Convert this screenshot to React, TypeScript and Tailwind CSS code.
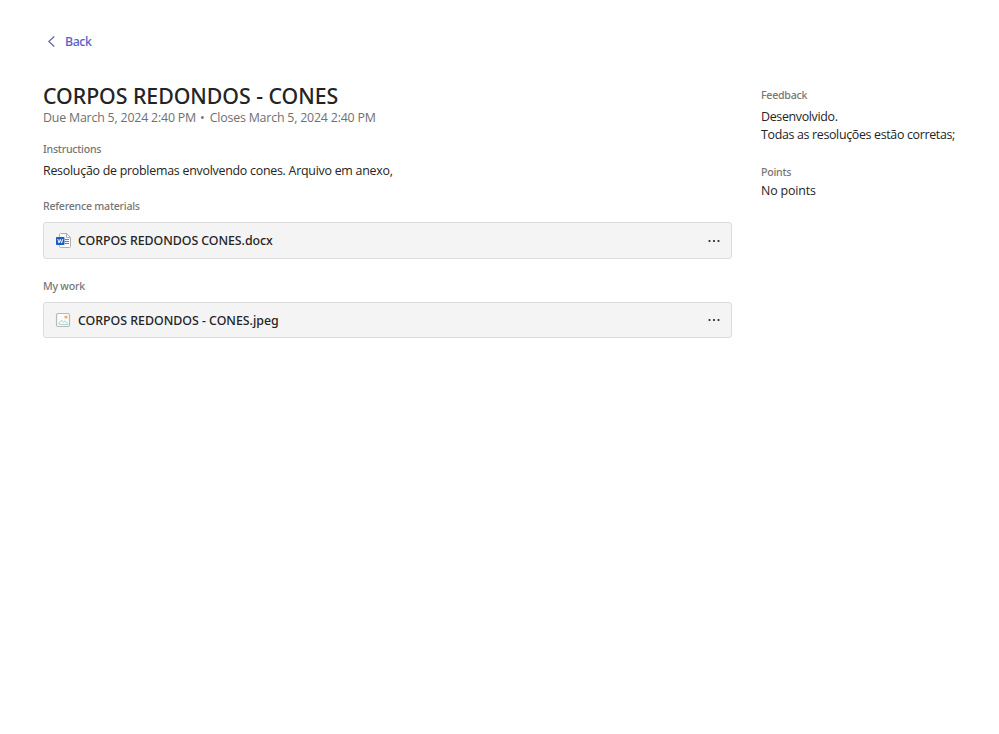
import React from "react";

function WordIcon() {
  return (
    <svg width="16" height="16" viewBox="0 0 16 16" className="shrink-0">
      <path d="M4.500 0.500h6l4 4v9a1 1 0 0 1-1 1h-9a1 1 0 0 1-1-1v-12a1 1 0 0 1 1-1z" fill="#fcfcfc" stroke="#b0b0b0" />
      <path d="M10.500 0.500v4h4" fill="none" stroke="#b0b0b0" />
      <path d="M9 6.500h4M9 8.500h4M9 10.500h4" stroke="#4a8be0" />
      <rect x="0" y="4" width="8.500" height="8" rx="0.800" fill="#1e5cc4" />
      <path d="M1.800 6l1.200 4 1.300-3.700 1.300 3.700 1.200-4" fill="none" stroke="#fff" strokeWidth="0.900" />
    </svg>
  );
}

function ImageIcon() {
  return (
    <svg width="16" height="16" viewBox="0 0 16 16" className="shrink-0">
      <rect x="1.500" y="1.500" width="13" height="13" rx="1.500" fill="#fafafa" stroke="#b8b8b8" strokeWidth="1.200" />
      <path d="M4 12.300v-1.500l2.500-2.500 2 2 1.300-1.200 2.700 2.300v1.200z" fill="none" stroke="#a5d5cc" strokeWidth="1" />
      <circle cx="11" cy="5" r="1.600" fill="#f6ad55" />
    </svg>
  );
}

function MoreIcon() {
  return (
    <svg width="14" height="4" viewBox="0 0 14 4" className="shrink-0" fill="#242424">
      <circle cx="2.500" cy="2" r="1.100" />
      <circle cx="7" cy="2" r="1.100" />
      <circle cx="11.500" cy="2" r="1.100" />
    </svg>
  );
}

function Label({ className, children }: { className: string; children: React.ReactNode }) {
  return <h2 className={`h-4 whitespace-nowrap font-['Noto_Sans',sans-serif] text-[10.6px] leading-4 font-medium tracking-[-0.24px] text-[#767676] ${className}`}>{children}</h2>;
}

function FileRow({ icon, name, className, nameClass }: { icon: React.ReactNode; name: string; className: string; nameClass: string }) {
  return (
    <div className={`flex w-[689px] items-center rounded-[3px] border border-[#dcdcdc] bg-[#f4f4f4] pr-[10px] ${className}`}>
      {icon}
      <span className={`grow whitespace-nowrap font-['Noto_Sans',sans-serif] text-[12.4px] font-medium text-[#242424] ${nameClass}`}>{name}</span>
      <button type="button" aria-label="More options"><MoreIcon /></button>
    </div>
  );
}

export default function App() {
  return (
    <div className="h-[734px] bg-white pt-[33px] pl-[43px] font-['Open_Sans','Noto_Sans',sans-serif] text-[12.4px] leading-[18px] text-[#242424]">
      <button type="button" className="flex h-[18px] items-center pl-1 font-['Noto_Sans',sans-serif] font-medium text-[#5b5fc7]">
        <svg width="9" height="12" viewBox="0 0 9 12" fill="none" stroke="#5a5e9c" strokeWidth="1.1">
          <path d="M7.300 0.500L1.800 5.500l5.500 5" />
        </svg>
        <span className="ml-[9px] tracking-[-0.45px]">Back</span>
      </button>
      <div className="mt-[32px] flex">
        <main className="w-[689px]">
          <h1 className="whitespace-nowrap font-['Noto_Sans',sans-serif] text-[21.3px] leading-[25px] font-medium tracking-[-0.04px]">CORPOS REDONDOS - CONES</h1>
          <p className="mt-px flex h-[18px] items-center whitespace-nowrap tracking-[-0.2px] text-[#707070]">
            <span>Due March 5, 2024 2:40 PM</span>
            <span className="mr-[5px] ml-[4px] tracking-normal">•</span>
            <span>Closes March 5, 2024 2:40 PM</span>
          </p>
          <Label className="mt-[14px]">Instructions</Label>
          <p className="mt-[5px] h-[18px] whitespace-nowrap tracking-[-0.25px]">Resolução de problemas envolvendo cones. Arquivo em anexo,</p>
          <Label className="mt-[18px]">Reference materials</Label>
          <FileRow icon={<WordIcon />} name="CORPOS REDONDOS CONES.docx" className="mt-2 h-[37px] gap-[6px] pl-[12px]" nameClass="tracking-[-0.07px]" />
          <Label className="mt-[19px]">My work</Label>
          <FileRow icon={<ImageIcon />} name="CORPOS REDONDOS - CONES.jpeg" className="mt-2 h-[36px] gap-[7px] pl-[11px]" nameClass="pt-[2px] tracking-[-0.03px]" />
        </main>
        <aside className="ml-[29px] pt-[4px]">
          <Label className="">Feedback</Label>
          <p className="mt-[5px] whitespace-nowrap tracking-[-0.32px]">Desenvolvido.<br />Todas as resoluções estão corretas;</p>
          <Label className="mt-[20px]">Points</Label>
          <p className="mt-[2px] tracking-[-0.15px]">No points</p>
        </aside>
      </div>
    </div>
  );
}
